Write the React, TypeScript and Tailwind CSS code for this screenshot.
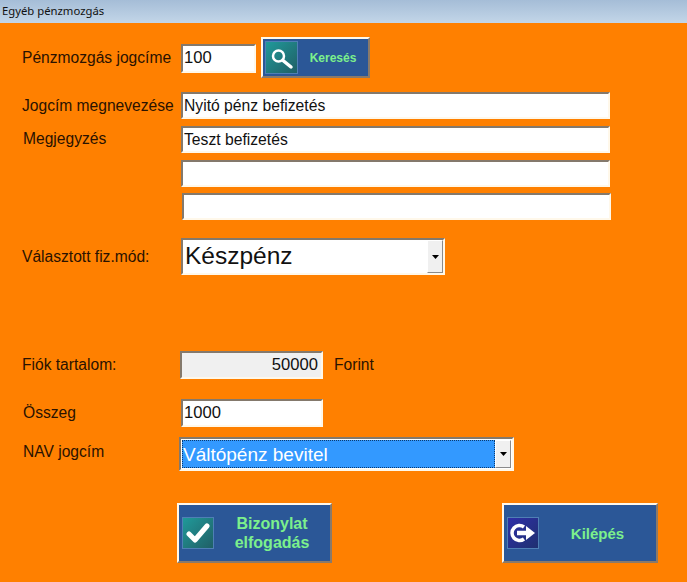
import React from "react";

const fieldEdge =
  "border-t-2 border-l-2 border-t-[#84796c] border-l-[#84796c] border-b-2 border-r-2 border-b-[#fff8ea] border-r-[#fff8ea]";

function Field({ w, h = "h-[27px]", ml = "ml-0", children, extra = "bg-white", size = "text-[15.7px]", pad = "px-[1px]" }: { w: string; h?: string; ml?: string; children?: React.ReactNode; extra?: string; size?: string; pad?: string }) {
  return (
    <div className={`${w} ${h} ${ml} ${fieldEdge} ${extra} ${size} ${pad} flex items-center leading-none text-[#111] shrink-0`}>
      {children}
    </div>
  );
}

function Label({ children, cls = "w-[159px]" }: { children: React.ReactNode; cls?: string }) {
  return <div className={`shrink-0 text-[15.6px] leading-none text-[#2a1200] whitespace-nowrap ${cls}`}>{children}</div>;
}

function DropBtn({ h }: { h: string }) {
  return (
    <div className={`w-[16px] ${h} shrink-0 bg-[#f0f0f0] border-r border-b border-[#8a8a8a] border-t border-l border-t-white border-l-white flex items-center justify-center`}>
      <svg width="7" height="4" viewBox="0 0 7 4"><path d="M0 0h7L3.5 4z" fill="#000" /></svg>
    </div>
  );
}

function ActionButton({ w, icon, children, iconBg, h = "h-[60px]", tile = "w-[32px] h-[32px] ml-[3px]", text = "text-[16px] leading-[19px]" }: { w: string; icon: React.ReactNode; children: React.ReactNode; iconBg: string; h?: string; tile?: string; text?: string }) {
  return (
    <div className={`${w} ${h} shrink-0 bg-[#2b5797] border-t-2 border-l-2 border-t-[#fff8ea] border-l-[#fff8ea] border-r-2 border-b-2 border-r-[#8a7a6a] border-b-[#8a7a6a] flex items-center`}>
      <div className={`${tile} ${iconBg} border border-[#4f7fb5] flex items-center justify-center shrink-0`}>{icon}</div>
      <div className={`flex-1 text-center font-bold text-[#7cf08c] ${text}`}>{children}</div>
    </div>
  );
}

export default function App() {
  return (
    <div className="w-[687px] h-[582px] bg-[#ff8000] overflow-hidden flex flex-col" style={{ fontFamily: '"Liberation Sans", Arial, sans-serif' }}>
      <div className="h-[23px] shrink-0 flex items-center pl-[2px] text-[11.3px] text-[#111] bg-gradient-to-b from-[#a5bdd7] to-[#c3d6e8]" style={{ fontFamily: '"Noto Sans", sans-serif' }}>
        Egyéb pénzmozgás
      </div>

      <div className="flex flex-col pl-[22px]">
        <div className="flex items-start mt-[14px] h-[41px]">
          <Label cls="w-[159px] mt-[13px]">Pénzmozgás jogcíme</Label>
          <div className="mt-[7px]">
            <Field w="w-[75px]" h="h-[29px]" size="text-[16.6px]">100</Field>
          </div>
          <div className="ml-[5px]">
            <ActionButton
              w="w-[109px]"
              h="h-[41px]"
              tile="w-[33px] h-[33px] ml-[2px]"
              text="text-[12px] leading-none"
              iconBg="bg-gradient-to-br from-[#1f9a9a] to-[#1f5f66]"
              icon={
                <svg width="24" height="24" viewBox="0 0 24 24" fill="none" stroke="#fff">
                  <circle cx="8.5" cy="10" r="5.5" strokeWidth="2.5" />
                  <path d="M13 14.5l8 6.5" strokeWidth="3.5" strokeLinecap="round" />
                </svg>
              }
            >
              Keresés
            </ActionButton>
          </div>
        </div>

        <div className="flex items-center mt-[14px]">
          <Label>Jogcím megnevezése</Label>
          <Field w="w-[429px]">Nyitó pénz befizetés</Field>
        </div>

        <div className="flex mt-[7px]">
          <Label cls="ml-[1px] w-[158px] pt-[5px]">Megjegyzés</Label>
          <div className="flex flex-col">
            <Field w="w-[429px]">Teszt befizetés</Field>
            <div className="mt-[7px]"><Field w="w-[429px]" /></div>
            <div className="mt-[6px]"><Field w="w-[429px]" ml="ml-[1px]" /></div>
          </div>
        </div>

        <div className="flex items-center mt-[18px]">
          <Label>Választott fiz.mód:</Label>
          <div className={`w-[264px] h-[37px] ${fieldEdge} bg-white flex items-center justify-between`}>
            <span className="pl-[2px] pb-[1px] text-[24.5px] leading-none text-[#111]">Készpénz</span>
            <DropBtn h="h-[33px]" />
          </div>
        </div>

        <div className="flex items-center mt-[76px]">
          <Label>Fiók tartalom:</Label>
          <Field w="w-[143px]" h="h-[28px]" ml="-ml-[1px]" extra="bg-[#f0f0f0] justify-end" pad="pr-[3px]" size="text-[16.6px]">50000</Field>
          <span className="ml-[11px] text-[15.6px] leading-none text-[#2a1200]">Forint</span>
        </div>

        <div className="flex items-center mt-[20px]">
          <Label cls="ml-[1px] w-[158px]">Összeg</Label>
          <Field w="w-[142px]" h="h-[28px]" size="text-[16.6px]">1000</Field>
        </div>

        <div className="flex items-start mt-[10px]">
          <Label cls="ml-[1px] w-[156px] pt-[7px]">NAV jogcím</Label>
          <div className={`w-[335px] h-[34px] ${fieldEdge} bg-white flex items-center p-[1px]`}>
            <div className="flex-1 h-full bg-[#3399ff] border border-dotted border-[#0a3a70] text-white text-[19px] leading-none flex items-center">Váltópénz bevitel</div>
            <DropBtn h="h-[28px]" />
          </div>
        </div>

        <div className="flex mt-[32px] ml-[155px]">
          <ActionButton
            w="w-[155px]"
            iconBg="bg-gradient-to-br from-[#1f9a9a] to-[#1f5f66]"
            icon={
              <svg width="24" height="22" viewBox="0 0 24 22" fill="none" stroke="#fff" strokeWidth="5" strokeLinecap="round" strokeLinejoin="round">
                <path d="M3 12l6 6L21 4" />
              </svg>
            }
          >
            Bizonylat<br />elfogadás
          </ActionButton>
          <div className="ml-[170px]">
            <ActionButton
              w="w-[156px]"
              text="text-[15px] leading-none"
              iconBg="bg-gradient-to-br from-[#2f2fa8] to-[#1f2f70]"
              icon={
                <svg width="26" height="22" viewBox="0 0 26 22" fill="none" stroke="#fff">
                  <path d="M14 5A7.5 7.5 0 1 0 14 17" strokeWidth="3.5" />
                  <path d="M7 11h11" strokeWidth="4.5" />
                  <path d="M16 4l9 7-9 7z" fill="#fff" strokeWidth="0" />
                </svg>
              }
            >
              Kilépés
            </ActionButton>
          </div>
        </div>
      </div>
    </div>
  );
}
